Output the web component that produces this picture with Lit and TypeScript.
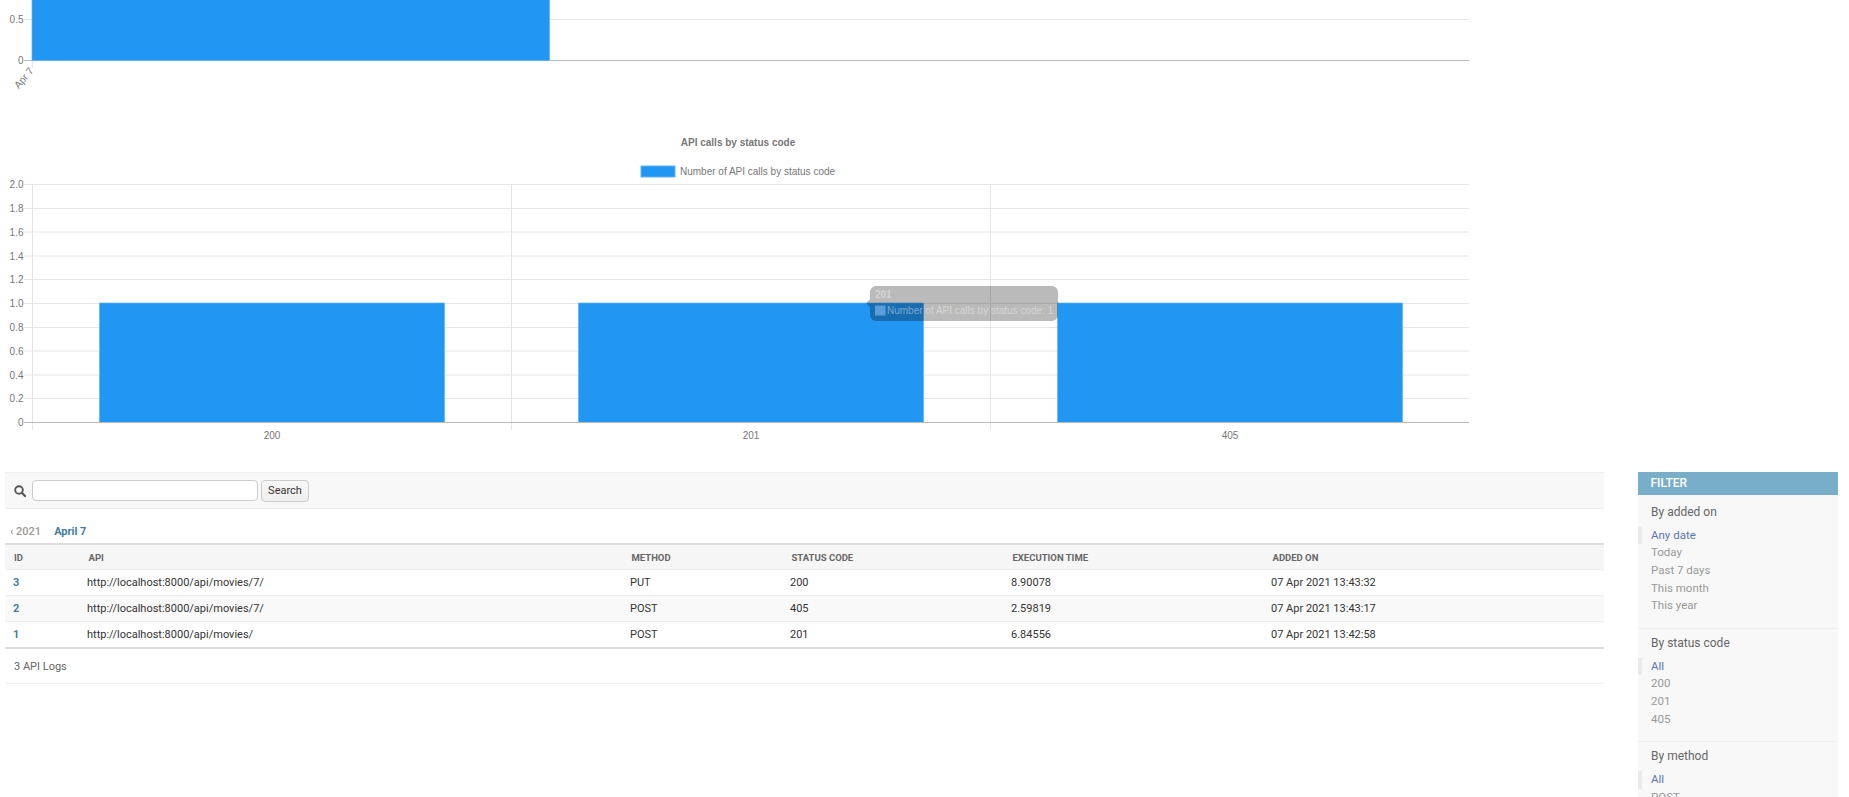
import { LitElement, html, svg, css } from 'lit';
import { customElement } from 'lit/decorators.js';

const BLUE = '#2196f3';
const EDGE = '#62b4f6';
const LEFT = 32;
const RIGHT = 1469;
const TIP = 0.27;

const rows = [
  { id: 3, api: 'http://localhost:8000/api/movies/7/', method: 'PUT', status: '200', time: '8.90078', added: '07 Apr 2021 13:43:32' },
  { id: 2, api: 'http://localhost:8000/api/movies/7/', method: 'POST', status: '405', time: '2.59819', added: '07 Apr 2021 13:43:17' },
  { id: 1, api: 'http://localhost:8000/api/movies/', method: 'POST', status: '201', time: '6.84556', added: '07 Apr 2021 13:42:58' },
];

const filters = [
  { title: 'By added on', items: ['Any date', 'Today', 'Past 7 days', 'This month', 'This year'] },
  { title: 'By status code', items: ['All', '200', '201', '405'] },
  { title: 'By method', items: ['All', 'POST', 'PUT'] },
];

@customElement('app-root')
export class AppRoot extends LitElement {
  static styles = css`
    :host {
      display: block;
      height: 797px;
      overflow: hidden;
      background: #fff;
      font-family: Roboto, 'Liberation Sans', sans-serif;
      color: #333;
    }
    .chart {
      display: block;
      width: 1480px;
      height: 472px;
    }
    .chart text {
      font-family: 'Liberation Sans', Arial, sans-serif;
      font-size: 10px;
      fill: #777;
    }
    .chart .title {
      font-weight: 700;
    }
    .chart .tip-title {
      font-weight: 700;
      fill: #fff;
      fill-opacity: 0.42;
    }
    .chart .tip-body {
      fill: #fff;
      fill-opacity: 0.42;
    }
    .content {
      display: flex;
      align-items: flex-start;
      padding: 0 11px 0 5px;
    }
    .main {
      width: 1599px;
      flex: none;
    }
    .toolbar {
      display: flex;
      align-items: center;
      height: 35px;
      background: #f8f8f8;
      border-top: 1px solid #eee;
      border-bottom: 1px solid #eee;
      padding-left: 9px;
    }
    .toolbar svg {
      width: 12px;
      height: 12px;
      margin: 1px 6px 0 0;
    }
    .toolbar input {
      width: 224px;
      height: 19px;
      padding: 0;
      border: 1px solid #ccc;
      border-radius: 4px;
      background: #fff;
      margin-right: 3px;
    }
    .toolbar button {
      width: 48px;
      height: 22px;
      padding: 0;
      border: 1px solid #ccc;
      border-radius: 4px;
      background: linear-gradient(#f8f8f8, #eee);
      font: 11px Roboto, sans-serif;
      color: #333;
      box-sizing: border-box;
    }
    .dates {
      display: flex;
      gap: 13px;
      height: 34px;
      align-items: flex-end;
      padding: 0 0 3px 5px;
      box-sizing: border-box;
      font-size: 11px;
      line-height: 16px;
      color: #999;
    }
    .dates b {
      font-weight: 700;
      color: #447e9b;
    }
    .dates .back {
      font-weight: 500;
    }
    table {
      width: 100%;
      border-collapse: collapse;
      table-layout: fixed;
      font-size: 11px;
      border-top: 2px solid #ddd;
      border-bottom: 2px solid #ddd;
    }
    th {
      height: 24px;
      padding: 0 0 0 11.5px;
      background: #f6f6f6;
      font-size: 9.5px;
      font-weight: 700;
      color: #666;
      text-align: left;
      text-transform: uppercase;
      border-bottom: 1px solid #eee;
    }
    td {
      height: 25px;
      padding: 0 0 0 10px;
      border-bottom: 1px solid #eee;
    }
    tr.alt td {
      background: #f9f9f9;
    }
    td.id {
      padding-left: 8px;
      color: #447e9b;
      font-weight: 700;
    }
    th.id {
      padding-left: 9px;
    }
    .count {
      height: 34px;
      display: flex;
      align-items: center;
      padding-left: 9px;
      font-size: 11px;
      color: #666;
      border-bottom: 1px solid #eee;
    }
    .filter {
      width: 200px;
      margin-left: 34px;
      flex: none;
      background: #f8f8f8;
    }
    .filter h2 {
      margin: 0;
      height: 23px;
      padding-left: 12.5px;
      background: #79aec8;
      color: #fff;
      font-size: 12px;
      font-weight: 500;
      line-height: 23px;
    }
    .group {
      padding: 5.5px 0 13px;
      border-bottom: 1px solid #eee;
    }
    .group:first-of-type {
      padding-top: 8.5px;
    }
    .group h3 {
      margin: 0 0 6px 13px;
      font-size: 12px;
      font-weight: 400;
      line-height: 17px;
      color: #666;
    }
    .group ul {
      margin: 0;
      padding: 0;
      list-style: none;
    }
    .group li {
      padding-left: 13px;
      font-size: 11.5px;
      line-height: 17.7px;
      color: #999;
    }
    .group li.on {
      padding-left: 9px;
      border-left: 4px solid #eaeaea;
      color: #5b74b2;
    }
  `;

  private yAxis(ticks: { y: number; label: string }[]) {
    return ticks.map(t => svg`
      <line x1=${LEFT - 8} x2=${RIGHT} y1=${t.y} y2=${t.y} stroke=${t.label === '0' ? '#bbb' : '#e6e6e6'}></line>
      <text x=${LEFT - 8.5} y=${t.y + 3.5} text-anchor="end">${t.label}</text>
    `);
  }

  private statusChart() {
    const top = 184.5;
    const bottom = 422.5;
    const step = (bottom - top) / 10;
    const ticks = Array.from({ length: 11 }, (_, i) => ({
      y: Math.round((top + step * i) * 2) / 2,
      label: i === 10 ? '0' : (2 - i * 0.2).toFixed(1),
    }));
    const cats = [
      { label: '200', x: 99.5 },
      { label: '201', x: 578.5 },
      { label: '405', x: 1057.5 },
    ];
    return svg`
      <text class="title" x="738" y="146" text-anchor="middle">API calls by status code</text>
      <rect x="641" y="166" width="34" height="11" fill=${BLUE} stroke=${EDGE}></rect>
      <text x="680" y="174.5">Number of API calls by status code</text>
      ${[LEFT + 0.5, 511.5, 990.5].map(x => svg`
        <line x1=${x} x2=${x} y1=${top} y2="430" stroke="#e6e6e6"></line>
      `)}
      ${this.yAxis(ticks)}
      ${cats.map(c => svg`
        <rect x=${c.x} y="303" width="345" height="119.5" fill=${BLUE} stroke=${EDGE} stroke-width="0.7"></rect>
        <text x=${c.x + 172.5} y="439" text-anchor="middle">${c.label}</text>
      `)}
      <line x1=${LEFT} x2=${RIGHT} y1="422.5" y2="422.5" stroke="#bbb"></line>
      <path d="M876 286H1052a6 6 0 0 1 6 6V315a6 6 0 0 1-6 6H876a6 6 0 0 1-6-6V307l-4-4 4-4V292a6 6 0 0 1 6-6Z" fill="#000" fill-opacity=${TIP}></path>
      <rect x="875" y="305.5" width="10.5" height="10" fill="#5a9edb"></rect>
      <text class="tip-title" x="875" y="298">201</text>
      <text class="tip-body" x="887" y="313.5">Number of API calls by status code: 1</text>
    `;
  }

  private dailyChart() {
    return svg`
      <line x1=${LEFT + 0.5} x2=${LEFT + 0.5} y1="0" y2="68" stroke="#e6e6e6"></line>
      ${this.yAxis([{ y: 19.5, label: '0.5' }, { y: 60.5, label: '0' }])}
      <rect x=${LEFT} y="-2" width="517.5" height="62.5" fill=${BLUE} stroke=${EDGE} stroke-width="0.7"></rect>
      <text transform="translate(34 71) rotate(-50)" text-anchor="end">Apr 7</text>
    `;
  }

  render() {
    return html`
      <svg class="chart" viewBox="0 0 1480 472">
        ${this.dailyChart()}
        ${this.statusChart()}
      </svg>
      <div class="content">
        <div class="main">
          <div class="toolbar">
            <svg viewBox="0 0 12 12">
              <circle cx="5" cy="5" r="3.8" fill="none" stroke="#555" stroke-width="1.9"></circle>
              <path d="M7.8 7.8L11 11" stroke="#555" stroke-width="2.2" stroke-linecap="round"></path>
            </svg>
            <input type="text" />
            <button>Search</button>
          </div>
          <div class="dates">
            <span class="back">‹ 2021</span>
            <b>April 7</b>
          </div>
          <table>
            <colgroup>
              <col style="width:72px" /><col style="width:543px" /><col style="width:160px" />
              <col style="width:221px" /><col style="width:260px" /><col />
            </colgroup>
            <thead>
              <tr>
                <th class="id">ID</th><th>API</th><th>Method</th>
                <th>Status code</th><th>Execution time</th><th>Added on</th>
              </tr>
            </thead>
            <tbody>
              ${rows.map((r, i) => html`
                <tr class=${i % 2 ? 'alt' : ''}>
                  <td class="id">${r.id}</td><td>${r.api}</td><td>${r.method}</td>
                  <td>${r.status}</td><td>${r.time}</td><td>${r.added}</td>
                </tr>
              `)}
            </tbody>
          </table>
          <div class="count">3 API Logs</div>
        </div>
        <aside class="filter">
          <h2>FILTER</h2>
          ${filters.map(f => html`
            <div class="group">
              <h3>${f.title}</h3>
              <ul>
                ${f.items.map((item, i) => html`<li class=${i === 0 ? 'on' : ''}>${item}</li>`)}
              </ul>
            </div>
          `)}
        </aside>
      </div>
    `;
  }
}
